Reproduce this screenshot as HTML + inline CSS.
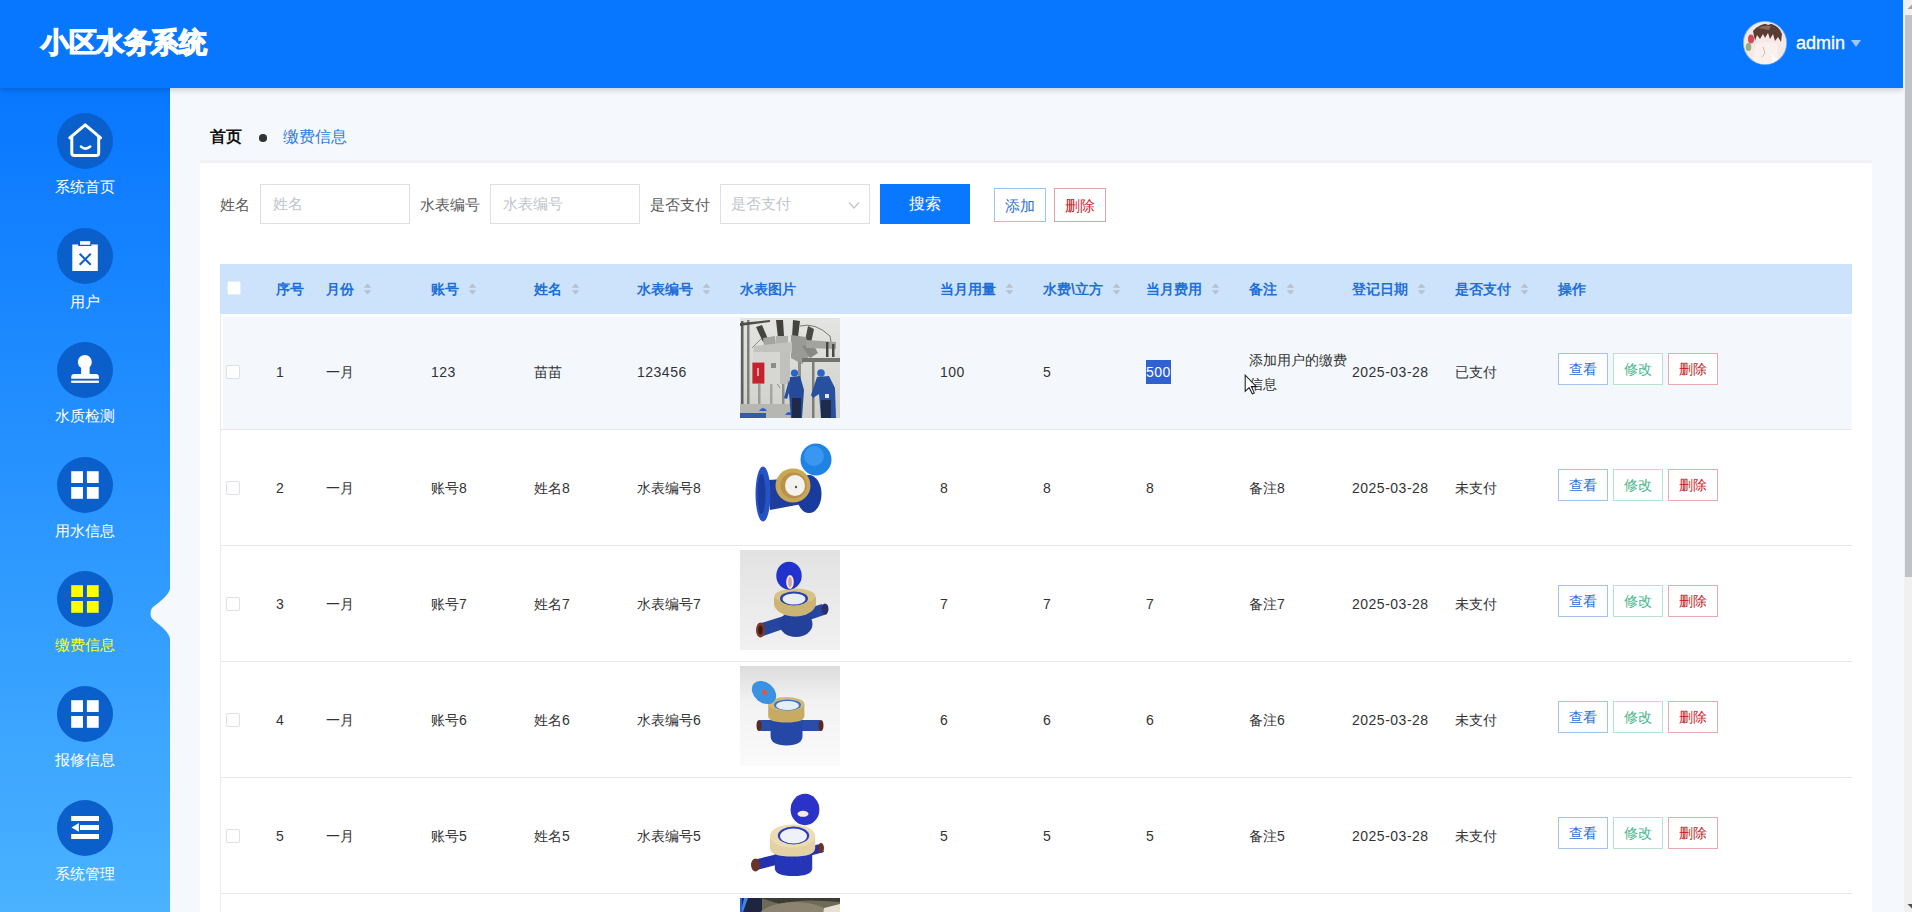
<!DOCTYPE html>
<html><head><meta charset="utf-8">
<style>
*{box-sizing:border-box;margin:0;padding:0}
html,body{width:1912px;height:912px;overflow:hidden;font-family:"Liberation Sans",sans-serif;background:#f5f8fd}
.abs{position:absolute}
#hdr{position:absolute;left:0;top:0;width:1903px;height:88px;background:#0877ff;box-shadow:0 2px 6px rgba(0,0,0,.18);z-index:5}
#title{position:absolute;left:41px;top:25px;letter-spacing:-0.5px;font-size:28px;font-weight:bold;color:#fff;line-height:36px;white-space:nowrap;-webkit-text-stroke:1.3px #fff}
#avatar{position:absolute;left:1744px;top:22px;width:42px;height:42px;border-radius:50%;overflow:hidden;background:#f3e6e6;box-shadow:0 0 0 1px rgba(255,255,255,.5)}
#uname{position:absolute;left:1796px;top:31px;font-size:18px;color:#fff;line-height:24px;-webkit-text-stroke:0.3px #fff}
#caret{position:absolute;left:1851px;top:40px;width:0;height:0;border-left:5px solid transparent;border-right:5px solid transparent;border-top:7px solid rgba(255,255,255,.6)}
#side{position:absolute;left:0;top:88px;width:170px;height:824px;background:linear-gradient(180deg,#0877ff 0%,#4ab2ff 100%)}
.nav{position:absolute;left:0;width:170px;height:114px}
.nav .c{position:absolute;left:57px;top:0;width:56px;height:56px;border-radius:50%;background:#0a5fcb}
.nav .c svg{position:absolute;left:0;top:0}
.nav .t{position:absolute;left:0;width:170px;top:62px;text-align:center;font-size:15px;color:#fff;line-height:24px;white-space:nowrap}
#crumb{position:absolute;left:210px;top:125px;font-size:16px;line-height:24px;white-space:nowrap}
#card{position:absolute;left:200px;top:163px;width:1672px;height:760px;background:#fff}
.lbl{position:absolute;font-size:15px;color:#5a5a5a;line-height:20px;white-space:nowrap}
.inp{position:absolute;top:184px;height:40px;width:150px;border:1px solid #dcdfe6;background:#fff;font-size:15px;color:#c0c4cc;line-height:38px;padding-left:12px;white-space:nowrap}
.btn{position:absolute;text-align:center;white-space:nowrap}
table{position:absolute;left:221px;top:264px;border-collapse:collapse;table-layout:fixed}
.th{position:absolute;top:277px;font-size:14px;font-weight:bold;color:#1f6fd8;line-height:24px;white-space:nowrap}
.td{position:absolute;font-size:14px;color:#333;line-height:24px;white-space:nowrap}
.n{letter-spacing:0.5px}
.td.rem{font-size:14px;color:#333}
.sel{background:#2f62d0;color:#fff;display:inline-block;height:23.5px;line-height:24px}
.ob{position:absolute;width:50px;height:32px;border:1px solid;background:#fff;font-size:14px;line-height:30px;text-align:center;white-space:nowrap}
.img{position:absolute;width:100px;height:100px;overflow:hidden;background:#eee}
.img svg{display:block;filter:blur(0.35px)}
</style></head><body>
<div id="hdr">
  <div id="title">小区水务系统</div>
  <div id="avatar"><svg width="42" height="42" viewBox="0 0 42 42"><rect width="42" height="42" fill="#f6e8e6"/>
<path d="M9,9 Q16,1 25,1.5 Q35,3 38,12 L37,20 L34,15 L31,19 L29,12 L26,17 L24,11 L21,16 L19,12 L16,17 L13,13 L11,19 Z" fill="#5a3c34"/>
<path d="M14,6 Q20,3 27,4 L25,8 L20,7 Z" fill="#8a6a60"/>
<path d="M20,1 Q24,0 28,1.5 L24,3 Z" fill="#e8e8e8"/>
<ellipse cx="7" cy="17" rx="3" ry="4.5" fill="#cf4c58"/>
<ellipse cx="4.5" cy="25" rx="2.8" ry="4" fill="#93b07d"/>
<path d="M12,22 Q22,18 33,22 L35,40 Q22,44 9,40 Z" fill="#faf0ee"/>
<path d="M19,25 L21,31 L18,35" stroke="#d2b2ad" stroke-width="0.9" fill="none"/>
<path d="M26,30 L29,41 L35,40 Z" fill="#fffafa"/>
</svg></div>
  <div id="uname">admin</div>
  <div id="caret"></div>
</div>
<div id="side"></div>
<div class="nav" style="top:113px"><div class="c"><svg width="56" height="56" viewBox="0 0 56 56"><path d="M12.8,24.8 L28.2,11.8 L43.6,24.8" fill="none" stroke="#fff" stroke-width="3" stroke-linecap="round" stroke-linejoin="round"/><path d="M14.8,24 V40 Q14.8,42.6 17.4,42.6 H39.1 Q41.7,42.6 41.7,40 V24" fill="none" stroke="#fff" stroke-width="3" stroke-linecap="round" stroke-linejoin="round"/><path d="M24,33.6 Q28.5,37.6 33.2,33.6" fill="none" stroke="#fff" stroke-width="2.6" stroke-linecap="round"/></svg></div><div class="t" style="color:#fff">系统首页</div></div>
<div class="nav" style="top:227.5px"><div class="c"><svg width="56" height="56" viewBox="0 0 56 56"><path d="M15.3,16.5 H21.2 V18.1 H34.3 V16.5 H40.8 V43.1 H15.3 Z" fill="#fff"/><rect x="23" y="13.2" width="10.2" height="3.6" fill="#fff"/><path d="M22.7,25.8 L33.7,36.8 M33.7,25.8 L22.7,36.8" stroke="#0a5fcb" stroke-width="2" fill="none"/></svg></div><div class="t" style="color:#fff">用户</div></div>
<div class="nav" style="top:342px"><div class="c"><svg width="56" height="56" viewBox="0 0 56 56"><circle cx="27.8" cy="20" r="7" fill="#fff"/><rect x="24.1" y="24" width="8.5" height="9" fill="#fff"/><path d="M14.2,36.7 V35 Q14.2,32 17.2,32 H38.9 Q41.9,32 41.9,35 V36.7 Z" fill="#fff"/><rect x="14.2" y="38.6" width="27.7" height="2.3" fill="#fff"/></svg></div><div class="t" style="color:#fff">水质检测</div></div>
<div class="nav" style="top:456.5px"><div class="c"><svg width="56" height="56" viewBox="0 0 56 56"><rect x="14.2" y="14.2" width="11.8" height="11.8" fill="#fff"/><rect x="29.9" y="14.2" width="11.8" height="11.8" fill="#fff"/><rect x="14.2" y="30" width="11.8" height="11.8" fill="#fff"/><rect x="29.9" y="30" width="11.8" height="11.8" fill="#fff"/></svg></div><div class="t" style="color:#fff">用水信息</div></div>
<div class="nav" style="top:571px"><div class="c"><svg width="56" height="56" viewBox="0 0 56 56"><rect x="14.2" y="14.2" width="11.8" height="11.8" fill="#ffff00"/><rect x="29.9" y="14.2" width="11.8" height="11.8" fill="#ffff00"/><rect x="14.2" y="30" width="11.8" height="11.8" fill="#ffff00"/><rect x="29.9" y="30" width="11.8" height="11.8" fill="#ffff00"/></svg></div><div class="t" style="color:#ffff00">缴费信息</div></div>
<div class="nav" style="top:685.5px"><div class="c"><svg width="56" height="56" viewBox="0 0 56 56"><rect x="14.2" y="14.2" width="11.8" height="11.8" fill="#fff"/><rect x="29.9" y="14.2" width="11.8" height="11.8" fill="#fff"/><rect x="14.2" y="30" width="11.8" height="11.8" fill="#fff"/><rect x="29.9" y="30" width="11.8" height="11.8" fill="#fff"/></svg></div><div class="t" style="color:#fff">报修信息</div></div>
<div class="nav" style="top:800px"><div class="c"><svg width="56" height="56" viewBox="0 0 56 56"><rect x="14.2" y="16" width="27.8" height="5" fill="#fff"/><rect x="23" y="25" width="19" height="5" fill="#fff"/><path d="M14.5,27.4 L21.9,23 V31.8 Z" fill="#fff"/><rect x="14.2" y="34" width="27.8" height="5" fill="#fff"/></svg></div><div class="t" style="color:#fff">系统管理</div></div>
<svg class="abs" style="left:148px;top:585px" width="24" height="56" viewBox="148 585 24 56"><path d="M170.5,585 C170.5,597 156,603 151.5,609 Q149.5,613.4 151.5,617.8 C156,624 170.5,630 170.5,642 Z" fill="#f5f8fd"/></svg>
<div id="crumb"><b style="color:#111">首页</b></div>
<div class="abs" style="left:259px;top:134px;width:7.5px;height:7.5px;border-radius:50%;background:#333"></div>
<div class="abs" style="left:283px;top:125px;font-size:16px;line-height:24px;color:#2f7ce0;white-space:nowrap">缴费信息</div>
<div id="card"></div>
<div class="abs" style="left:200px;top:160px;width:1672px;height:3px;background:#eff1f4"></div>
<div class="lbl" style="left:220px;top:195px">姓名</div>
<div class="inp" style="left:260px">姓名</div>
<div class="lbl" style="left:420px;top:195px">水表编号</div>
<div class="inp" style="left:490px">水表编号</div>
<div class="lbl" style="left:650px;top:195px">是否支付</div>
<div class="inp" style="left:720px;padding-left:10px">是否支付<svg class="abs" style="left:127px;top:16px" width="12" height="9" viewBox="0 0 12 9"><path d="M1,1.5 L6,7 L11,1.5" fill="none" stroke="#c0c4cc" stroke-width="1.2"/></svg></div>
<div class="btn" style="left:880px;top:184px;width:90px;height:40px;background:#0a77ff;color:#fff;font-size:16px;line-height:40px">搜索</div>
<div class="btn" style="left:994px;top:188px;width:52px;height:34px;border:1px solid #9cc3f2;color:#2a6fd0;font-size:15px;line-height:33px;background:#fff">添加</div>
<div class="btn" style="left:1054px;top:188px;width:52px;height:34px;border:1px solid #dca4a8;color:#c21f2a;font-size:15px;line-height:33px;background:#fff">删除</div>

<div class="abs" style="left:220px;top:264px;width:1632px;height:50px;background:#cce3fb"></div>
<div class="abs" style="left:227px;top:281px;width:13.5px;height:13.5px;background:#fff;border:1px solid #e4ecf6;border-radius:2px"></div>
<div class="th" style="left:276px">序号</div>
<div class="th" style="left:326px">月份<svg width="9" height="12" viewBox="0 0 9 12" style="margin-left:9px;vertical-align:-1px"><path d="M4.5,0.5 L8.3,4.8 H0.7 Z M4.5,11.5 L8.3,7.2 H0.7 Z" fill="#b6bfcd"/></svg></div>
<div class="th" style="left:431px">账号<svg width="9" height="12" viewBox="0 0 9 12" style="margin-left:9px;vertical-align:-1px"><path d="M4.5,0.5 L8.3,4.8 H0.7 Z M4.5,11.5 L8.3,7.2 H0.7 Z" fill="#b6bfcd"/></svg></div>
<div class="th" style="left:534px">姓名<svg width="9" height="12" viewBox="0 0 9 12" style="margin-left:9px;vertical-align:-1px"><path d="M4.5,0.5 L8.3,4.8 H0.7 Z M4.5,11.5 L8.3,7.2 H0.7 Z" fill="#b6bfcd"/></svg></div>
<div class="th" style="left:637px">水表编号<svg width="9" height="12" viewBox="0 0 9 12" style="margin-left:9px;vertical-align:-1px"><path d="M4.5,0.5 L8.3,4.8 H0.7 Z M4.5,11.5 L8.3,7.2 H0.7 Z" fill="#b6bfcd"/></svg></div>
<div class="th" style="left:740px">水表图片</div>
<div class="th" style="left:940px">当月用量<svg width="9" height="12" viewBox="0 0 9 12" style="margin-left:9px;vertical-align:-1px"><path d="M4.5,0.5 L8.3,4.8 H0.7 Z M4.5,11.5 L8.3,7.2 H0.7 Z" fill="#b6bfcd"/></svg></div>
<div class="th" style="left:1043px">水费\立方<svg width="9" height="12" viewBox="0 0 9 12" style="margin-left:9px;vertical-align:-1px"><path d="M4.5,0.5 L8.3,4.8 H0.7 Z M4.5,11.5 L8.3,7.2 H0.7 Z" fill="#b6bfcd"/></svg></div>
<div class="th" style="left:1146px">当月费用<svg width="9" height="12" viewBox="0 0 9 12" style="margin-left:9px;vertical-align:-1px"><path d="M4.5,0.5 L8.3,4.8 H0.7 Z M4.5,11.5 L8.3,7.2 H0.7 Z" fill="#b6bfcd"/></svg></div>
<div class="th" style="left:1249px">备注<svg width="9" height="12" viewBox="0 0 9 12" style="margin-left:9px;vertical-align:-1px"><path d="M4.5,0.5 L8.3,4.8 H0.7 Z M4.5,11.5 L8.3,7.2 H0.7 Z" fill="#b6bfcd"/></svg></div>
<div class="th" style="left:1352px">登记日期<svg width="9" height="12" viewBox="0 0 9 12" style="margin-left:9px;vertical-align:-1px"><path d="M4.5,0.5 L8.3,4.8 H0.7 Z M4.5,11.5 L8.3,7.2 H0.7 Z" fill="#b6bfcd"/></svg></div>
<div class="th" style="left:1455px">是否支付<svg width="9" height="12" viewBox="0 0 9 12" style="margin-left:9px;vertical-align:-1px"><path d="M4.5,0.5 L8.3,4.8 H0.7 Z M4.5,11.5 L8.3,7.2 H0.7 Z" fill="#b6bfcd"/></svg></div>
<div class="th" style="left:1558px">操作</div>
<div class="abs" style="left:220px;top:314px;width:1px;height:600px;background:#e6e9ee"></div>
<div class="abs" style="left:223px;top:317px;width:1629px;height:112px;background:#f4f8fd"></div>
<div class="abs" style="left:221px;top:429px;width:1631px;height:1px;background:#e4e7ed"></div>
<div class="abs" style="left:226px;top:365px;width:13.5px;height:13.5px;background:#fff;border:1px solid #dcdfe6;border-radius:2px"></div>
<div class="td" style="left:276px;top:360px"><span class="n">1</span></div>
<div class="td" style="left:326px;top:360px">一月</div>
<div class="td" style="left:431px;top:360px"><span class="n">123</span></div>
<div class="td" style="left:534px;top:360px">苗苗</div>
<div class="td" style="left:637px;top:360px"><span class="n">123456</span></div>
<div class="td" style="left:940px;top:360px"><span class="n">100</span></div>
<div class="td" style="left:1043px;top:360px"><span class="n">5</span></div>
<div class="td" style="left:1146px;top:360px"><span class="sel"><span class="n">500</span></span></div>
<div class="td rem" style="left:1249px;top:348px">添加用户的缴费<br>信息</div>
<div class="td" style="left:1352px;top:360px"><span class="n">2025-03-28</span></div>
<div class="td" style="left:1455px;top:360px">已支付</div>
<div class="ob" style="left:1558px;top:353px;border-color:#a3c4ee;color:#2a6fd2">查看</div>
<div class="ob" style="left:1613px;top:353px;border-color:#b6e2d0;color:#45b58a">修改</div>
<div class="ob" style="left:1668px;top:353px;border-color:#e6aab0;color:#c41d28">删除</div>
<div class="img" id="img1" style="left:740px;top:318px"><svg width="100" height="100" viewBox="0 0 100 100"> <defs><linearGradient id="g1" x1="0" y1="0" x2="0" y2="1"><stop offset="0" stop-color="#e4e4e2"/><stop offset="1" stop-color="#cfcfcb"/></linearGradient></defs> <rect width="100" height="100" fill="url(#g1)"/> <rect x="1" y="3" width="2.5" height="97" fill="#5f5f5b"/> <rect x="7" y="2" width="2.5" height="98" fill="#7f7f7b"/> <path d="M0,5 L30,2 L30,4 L0,8 Z" fill="#4f4f4a"/> <path d="M20,40 L40,70 M12,30 L22,20" stroke="#777" stroke-width="0.8"/> <path d="M16,9 L22,7 L28,21 L23,24 Z" fill="#45443f"/> <path d="M36,2 L43,2 L44,18 L38,20 Z" fill="#42413c"/> <path d="M53,2 L60,3 L58,19 L52,20 Z" fill="#43423d"/> <path d="M68,8 L74,11 L71,25 L65,23 Z" fill="#4a4944"/> <path d="M60,8 Q75,4 90,18 L92,30" stroke="#5a5a55" stroke-width="0.8" fill="none"/> <path d="M23,20 L35,18 L36,28 L24,29 Z" fill="#a4a4a0"/> <path d="M36,18 L48,18 L48,27 L36,27 Z" fill="#b0b0ac"/> <path d="M51,17 L66,19 L71,36 L62,46 L51,40 Z" fill="#9a9a96"/> <path d="M62,28 L73,26 L78,35 L70,40 Z" fill="#878783"/> <path d="M14,28 L52,24 L52,35 L13,36 Z" fill="#c2c2be"/> <rect x="13" y="34" width="37" height="32" fill="#d6d6d2"/> <rect x="40" y="34" width="10" height="32" fill="#c0c0bc"/> <rect x="12.4" y="44.6" width="12" height="21" fill="#c2232c"/> <rect x="17" y="50" width="2" height="8" fill="#e8a0a0"/> <rect x="31" y="45" width="5" height="5" fill="#8c8c88"/> <path d="M66,22 L96,24 L96,31 L66,30 Z" fill="#a2a29e"/> <rect x="86" y="24" width="2.5" height="15" fill="#474742"/> <rect x="92" y="26" width="2.5" height="13" fill="#4a4a45"/> <rect x="62" y="40" width="38" height="4" fill="#727270"/> <rect x="58" y="44" width="3" height="56" fill="#8e8e8a"/> <rect x="72" y="44" width="2.5" height="56" fill="#7c7c78"/> <rect x="18" y="66" width="2.5" height="34" fill="#9c9c98"/> <rect x="30" y="66" width="2.5" height="34" fill="#a5a5a1"/> <rect x="42" y="66" width="2.5" height="34" fill="#8e8e8a"/> <rect x="0" y="86" width="58" height="14" fill="#b6b6b2"/> <path d="M19,93 Q23,87 27,93 Z" fill="#2f5fc0"/> <path d="M45,97 Q49,91 53,97 Z" fill="#2f5fc0"/> <rect x="0" y="95" width="26" height="5" fill="#3a5aa0"/> <circle cx="54.5" cy="55" r="3.6" fill="#2e63c6"/> <path d="M50,59 L60,58 L64,72 L62,100 L51,100 L49,75 Z" fill="#254a9a"/> <path d="M49,62 L44,80 L47,81 L51,68 Z" fill="#2a4f9e"/> <rect x="52" y="80" width="9" height="20" fill="#1e2a48"/> <circle cx="81" cy="55" r="3.8" fill="#2e63c6"/> <path d="M77,59 L89,58 L95,70 L96,100 L81,100 L79,76 L73,80 L71,77 Z" fill="#27509f"/> <rect x="81" y="82" width="10" height="18" fill="#1f2b4a"/> <rect x="85" y="76" width="4" height="4" fill="#e6e6e6"/> </svg></div>
<div class="abs" style="left:221px;top:545px;width:1631px;height:1px;background:#e4e7ed"></div>
<div class="abs" style="left:226px;top:481px;width:13.5px;height:13.5px;background:#fff;border:1px solid #dcdfe6;border-radius:2px"></div>
<div class="td" style="left:276px;top:476px"><span class="n">2</span></div>
<div class="td" style="left:326px;top:476px">一月</div>
<div class="td" style="left:431px;top:476px">账号<span class="n">8</span></div>
<div class="td" style="left:534px;top:476px">姓名<span class="n">8</span></div>
<div class="td" style="left:637px;top:476px">水表编号<span class="n">8</span></div>
<div class="td" style="left:940px;top:476px"><span class="n">8</span></div>
<div class="td" style="left:1043px;top:476px"><span class="n">8</span></div>
<div class="td" style="left:1146px;top:476px"><span class="n">8</span></div>
<div class="td" style="left:1249px;top:476px">备注<span class="n">8</span></div>
<div class="td" style="left:1352px;top:476px"><span class="n">2025-03-28</span></div>
<div class="td" style="left:1455px;top:476px">未支付</div>
<div class="ob" style="left:1558px;top:469px;border-color:#a3c4ee;color:#2a6fd2">查看</div>
<div class="ob" style="left:1613px;top:469px;border-color:#b6e2d0;color:#45b58a">修改</div>
<div class="ob" style="left:1668px;top:469px;border-color:#e6aab0;color:#c41d28">删除</div>
<div class="img" id="img2" style="left:740px;top:434px"><svg width="100" height="100" viewBox="0 0 100 100"> <rect width="100" height="100" fill="#fff"/> <path d="M28,46 L60,44 L62,70 L30,76 Z" fill="#1e3d9c"/> <ellipse cx="69" cy="60" rx="12.5" ry="19" fill="#1a3b9e"/> <ellipse cx="23" cy="60" rx="7.5" ry="27.5" fill="#2453c6"/> <ellipse cx="21.5" cy="60" rx="4" ry="20" fill="#1a3c9e"/> <ellipse cx="53" cy="51.5" rx="17.5" ry="17" fill="#c9a757"/> <ellipse cx="53.5" cy="51.5" rx="13" ry="13" fill="#b8914a"/> <ellipse cx="55" cy="51.5" rx="10" ry="10.5" fill="#f4f2ee"/> <circle cx="56" cy="53" r="1.2" fill="#555"/> <ellipse cx="76" cy="25.5" rx="15.5" ry="16" fill="#1f83e6"/> <ellipse cx="74" cy="22" rx="10" ry="10" fill="#3a97f0"/> </svg></div>
<div class="abs" style="left:221px;top:661px;width:1631px;height:1px;background:#e4e7ed"></div>
<div class="abs" style="left:226px;top:597px;width:13.5px;height:13.5px;background:#fff;border:1px solid #dcdfe6;border-radius:2px"></div>
<div class="td" style="left:276px;top:592px"><span class="n">3</span></div>
<div class="td" style="left:326px;top:592px">一月</div>
<div class="td" style="left:431px;top:592px">账号<span class="n">7</span></div>
<div class="td" style="left:534px;top:592px">姓名<span class="n">7</span></div>
<div class="td" style="left:637px;top:592px">水表编号<span class="n">7</span></div>
<div class="td" style="left:940px;top:592px"><span class="n">7</span></div>
<div class="td" style="left:1043px;top:592px"><span class="n">7</span></div>
<div class="td" style="left:1146px;top:592px"><span class="n">7</span></div>
<div class="td" style="left:1249px;top:592px">备注<span class="n">7</span></div>
<div class="td" style="left:1352px;top:592px"><span class="n">2025-03-28</span></div>
<div class="td" style="left:1455px;top:592px">未支付</div>
<div class="ob" style="left:1558px;top:585px;border-color:#a3c4ee;color:#2a6fd2">查看</div>
<div class="ob" style="left:1613px;top:585px;border-color:#b6e2d0;color:#45b58a">修改</div>
<div class="ob" style="left:1668px;top:585px;border-color:#e6aab0;color:#c41d28">删除</div>
<div class="img" id="img3" style="left:740px;top:550px"><svg width="100" height="100" viewBox="0 0 100 100"> <defs><linearGradient id="g3" x1="0" y1="0" x2="0" y2="1"><stop offset="0" stop-color="#e2e2e2"/><stop offset="1" stop-color="#f1f1f1"/></linearGradient></defs> <rect width="100" height="100" fill="url(#g3)"/> <path d="M18,74 L82,54 L87,64 L23,86 Z" fill="#26459e"/> <ellipse cx="20.5" cy="80" rx="4.5" ry="7.5" fill="#7a3a2c"/> <ellipse cx="20.5" cy="80" rx="2.2" ry="4.5" fill="#3a1a14"/> <ellipse cx="85" cy="59" rx="3.5" ry="5.5" fill="#2a2f6a"/> <ellipse cx="56" cy="74" rx="16.5" ry="13" fill="#23409a"/> <ellipse cx="55" cy="53" rx="21" ry="13.5" fill="#cdb374"/> <rect x="34" y="47" width="42" height="8" fill="#cdb374"/> <ellipse cx="55" cy="46" rx="20.5" ry="7.5" fill="#d8c288"/> <ellipse cx="54" cy="48.5" rx="14" ry="7" fill="#2d45a8"/> <ellipse cx="54" cy="49" rx="11.5" ry="5.5" fill="#e9eef6"/> <ellipse cx="49" cy="25.7" rx="12.7" ry="14" fill="#2133cc"/> <ellipse cx="50" cy="32" rx="3.8" ry="7" fill="#f1e6e6"/> <ellipse cx="50" cy="32" rx="1.8" ry="5" fill="#d5a0a0"/> </svg></div>
<div class="abs" style="left:221px;top:777px;width:1631px;height:1px;background:#e4e7ed"></div>
<div class="abs" style="left:226px;top:713px;width:13.5px;height:13.5px;background:#fff;border:1px solid #dcdfe6;border-radius:2px"></div>
<div class="td" style="left:276px;top:708px"><span class="n">4</span></div>
<div class="td" style="left:326px;top:708px">一月</div>
<div class="td" style="left:431px;top:708px">账号<span class="n">6</span></div>
<div class="td" style="left:534px;top:708px">姓名<span class="n">6</span></div>
<div class="td" style="left:637px;top:708px">水表编号<span class="n">6</span></div>
<div class="td" style="left:940px;top:708px"><span class="n">6</span></div>
<div class="td" style="left:1043px;top:708px"><span class="n">6</span></div>
<div class="td" style="left:1146px;top:708px"><span class="n">6</span></div>
<div class="td" style="left:1249px;top:708px">备注<span class="n">6</span></div>
<div class="td" style="left:1352px;top:708px"><span class="n">2025-03-28</span></div>
<div class="td" style="left:1455px;top:708px">未支付</div>
<div class="ob" style="left:1558px;top:701px;border-color:#a3c4ee;color:#2a6fd2">查看</div>
<div class="ob" style="left:1613px;top:701px;border-color:#b6e2d0;color:#45b58a">修改</div>
<div class="ob" style="left:1668px;top:701px;border-color:#e6aab0;color:#c41d28">删除</div>
<div class="img" id="img4" style="left:740px;top:666px"><svg width="100" height="100" viewBox="0 0 100 100"> <defs><linearGradient id="g4" x1="0" y1="0" x2="0" y2="1"><stop offset="0" stop-color="#dcdcdc"/><stop offset="0.35" stop-color="#f2f2f2"/><stop offset="1" stop-color="#fafafa"/></linearGradient></defs> <rect width="100" height="100" fill="url(#g4)"/> <rect x="18" y="54" width="64" height="11" rx="3" fill="#2a4da8"/> <ellipse cx="19" cy="59.5" rx="2.5" ry="5.5" fill="#5a2a22"/> <ellipse cx="81" cy="59.5" rx="2.5" ry="5.5" fill="#5a2a22"/> <path d="M30.6,54 H62.5 V70 Q62.5,79.4 46.5,79.4 Q30.6,79.4 30.6,70 Z" fill="#2547a6"/> <path d="M28.2,38 H64.4 V50 Q64.4,56.5 46.3,56.5 Q28.2,56.5 28.2,50 Z" fill="#c7ab62"/> <ellipse cx="46.3" cy="38" rx="18.1" ry="7" fill="#d3b978"/> <ellipse cx="47.5" cy="39" rx="13.5" ry="5.6" fill="#3577c4"/> <ellipse cx="47.5" cy="39.5" rx="11.5" ry="4.6" fill="#e6eef8"/> <ellipse cx="24" cy="26.5" rx="13.5" ry="10" transform="rotate(40 24 26.5)" fill="#3b92e2"/> <ellipse cx="24.5" cy="26.4" rx="2.2" ry="3" fill="#e0583a"/> </svg></div>
<div class="abs" style="left:221px;top:893px;width:1631px;height:1px;background:#e4e7ed"></div>
<div class="abs" style="left:226px;top:829px;width:13.5px;height:13.5px;background:#fff;border:1px solid #dcdfe6;border-radius:2px"></div>
<div class="td" style="left:276px;top:824px"><span class="n">5</span></div>
<div class="td" style="left:326px;top:824px">一月</div>
<div class="td" style="left:431px;top:824px">账号<span class="n">5</span></div>
<div class="td" style="left:534px;top:824px">姓名<span class="n">5</span></div>
<div class="td" style="left:637px;top:824px">水表编号<span class="n">5</span></div>
<div class="td" style="left:940px;top:824px"><span class="n">5</span></div>
<div class="td" style="left:1043px;top:824px"><span class="n">5</span></div>
<div class="td" style="left:1146px;top:824px"><span class="n">5</span></div>
<div class="td" style="left:1249px;top:824px">备注<span class="n">5</span></div>
<div class="td" style="left:1352px;top:824px"><span class="n">2025-03-28</span></div>
<div class="td" style="left:1455px;top:824px">未支付</div>
<div class="ob" style="left:1558px;top:817px;border-color:#a3c4ee;color:#2a6fd2">查看</div>
<div class="ob" style="left:1613px;top:817px;border-color:#b6e2d0;color:#45b58a">修改</div>
<div class="ob" style="left:1668px;top:817px;border-color:#e6aab0;color:#c41d28">删除</div>
<div class="img" id="img5" style="left:740px;top:782px"><svg width="100" height="100" viewBox="0 0 100 100"> <rect width="100" height="100" fill="#fff"/> <path d="M13,78 L80,62 L84,70 L17,88 Z" fill="#2331ae"/> <ellipse cx="15.5" cy="83" rx="4.5" ry="6.5" fill="#6a3426"/> <ellipse cx="81" cy="66" rx="3" ry="5" fill="#6a3426"/> <path d="M34.8,70 H72.2 V86 Q72.2,94 53.5,94 Q34.8,94 34.8,86 Z" fill="#2535b8"/> <path d="M30,55 H75.2 V66 Q75.2,74.6 52.6,74.6 Q30,74.6 30,66 Z" fill="#e4d2a4"/> <ellipse cx="52.6" cy="54" rx="22.6" ry="11.5" fill="#ecdcb4"/> <ellipse cx="53.5" cy="53.5" rx="15.7" ry="9" fill="#2a3bbf"/> <ellipse cx="53.5" cy="54" rx="13.5" ry="7.5" fill="#eef1f8"/> <ellipse cx="65" cy="27.5" rx="14.4" ry="15.7" fill="#2a32c8"/> <ellipse cx="63" cy="31.8" rx="5.5" ry="3" fill="#f3e8e4"/> </svg></div>
<div class="img" id="img6" style="left:740px;top:898px"><svg width="100" height="100" viewBox="0 0 100 100"> <rect width="100" height="100" fill="#6e6a5a"/> <rect x="0" y="0" width="22" height="100" fill="#1f2440"/> <path d="M4,0 L8,0 L3,14 L1,14 Z" fill="#3b86f0"/> <rect x="0" y="0" width="2" height="100" fill="#2a60d0"/> <path d="M20,0 H100 V4 Q60,0 40,6 Z" fill="#3c3c34"/> <ellipse cx="55" cy="24" rx="40" ry="20" fill="#8c8470"/> <path d="M84,10 L100,6 L100,20 L82,24 Z" fill="#e8e0d0"/> </svg></div>
<div class="abs" style="left:1903px;top:0;width:1px;height:88px;background:#e9f6fd;z-index:9"></div>
<div class="abs" style="left:1904px;top:0;width:8px;height:912px;background:#f0f0f0;z-index:9"></div>
<div class="abs" style="left:1905px;top:15px;width:7px;height:562px;background:#bfc3c7;z-index:10"></div>
<svg class="abs" style="left:1904px;top:0;z-index:10" width="8" height="15" viewBox="0 0 8 15"><path d="M3.5,9 L8,4.5 L8,9 Z" fill="#a3a3a3"/></svg>
<svg class="abs" style="left:1904px;top:897px;z-index:10" width="8" height="15" viewBox="0 0 8 15"><path d="M3.5,7 L8,7 L8,11.5 Z" fill="#505050"/></svg>
<svg class="abs" style="left:1244px;top:374px;z-index:20" width="14" height="22" viewBox="0 0 14 22"><path d="M1.2,1.2 V17.4 L5.1,13.7 L8.3,19.8 L10.3,18.9 L7.4,12.6 H12.4 Z" fill="#fff" stroke="#1a1a1a" stroke-width="1.05" stroke-linejoin="miter"/></svg>
</body></html>
